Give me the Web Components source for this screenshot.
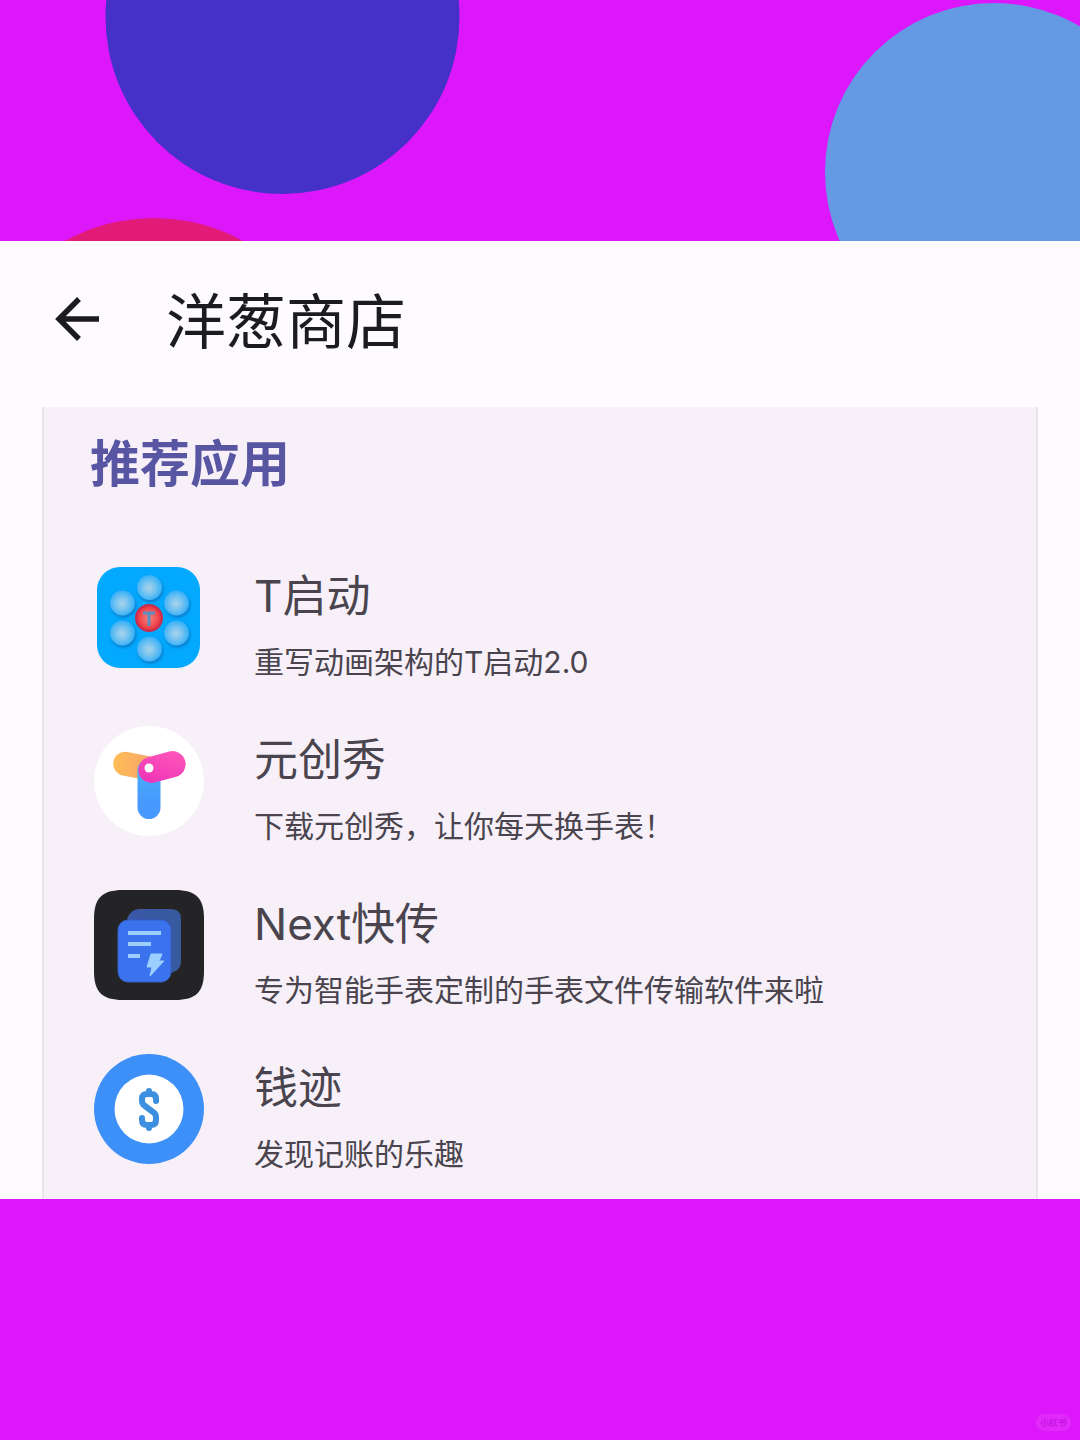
<!DOCTYPE html>
<html lang="zh-CN">
<head>
<meta charset="utf-8">
<meta name="viewport" content="width=device-width, initial-scale=1">
<title>洋葱商店</title>
<style>
  body {
    margin: 0;
    min-height: 100vh;
    background: #dc18fa;
    font-family: Inter, "Noto Sans CJK SC", sans-serif;
    color: #1c1b1f;
  }
</style>
</head>
<body>
<store-page>
  <store-header slot="header">洋葱商店</store-header>
  <app-section heading="推荐应用">
    <app-item>
      <svg slot="icon" viewBox="0 0 110 110" aria-hidden="true">
        <defs>
          <radialGradient id="ball" cx=".48" cy=".52" r=".55">
            <stop offset="0" stop-color="#a9d3ea"/><stop offset=".45" stop-color="#79c4f0"/><stop offset="1" stop-color="#2caef8"/>
          </radialGradient>
          <radialGradient id="core"><stop offset="0" stop-color="#ee8582"/><stop offset=".7" stop-color="#f3484d"/><stop offset="1" stop-color="#dc2944"/></radialGradient>
          <filter id="drop" x="-30%" y="-30%" width="160%" height="160%"><feDropShadow dx="1" dy="2" stdDeviation="1.5" flood-color="#075baa" flood-opacity=".65"/></filter>
        </defs>
        <rect x="3" y="5" width="103" height="101" rx="23" fill="#03a9fe"/>
        <g fill="url(#ball)" filter="url(#drop)">
          <circle cx="55.500" cy="25.500" r="12.500"/><circle cx="28.500" cy="41" r="12.500"/><circle cx="82.500" cy="41" r="12.500"/>
          <circle cx="28.500" cy="71" r="12.500"/><circle cx="82.500" cy="71" r="12.500"/><circle cx="55.500" cy="87" r="12.500"/>
        </g>
        <circle cx="55" cy="56" r="13" fill="url(#core)" stroke="#c52f51" stroke-width="2"/>
        <path d="M49 51H61M55 51V64" fill="none" stroke="#5a8fc0" stroke-width="3"/>
      </svg>
      T启动
      <span slot="summary">重写动画架构的T启动2.0</span>
    </app-item>
    <app-item>
      <svg slot="icon" viewBox="0 0 110 110" aria-hidden="true">
        <defs>
          <linearGradient id="blue" x1="0" y1="0" x2="0" y2="1"><stop offset="0" stop-color="#44b6f4"/><stop offset=".7" stop-color="#4899ff"/></linearGradient>
          <linearGradient id="pink" x1="0" y1="1" x2="1" y2="0"><stop offset="0" stop-color="#ed2fb8"/><stop offset="1" stop-color="#ff5cb9"/></linearGradient>
          <linearGradient id="amber"><stop offset="0" stop-color="#ffbd56"/><stop offset="1" stop-color="#f39d70"/></linearGradient>
        </defs>
        <circle cx="55" cy="55" r="55" fill="#fff"/>
        <rect x="19" y="28" width="50" height="24" rx="12" transform="rotate(11 43 40)" fill="url(#amber)"/>
        <rect x="43.500" y="33" width="23" height="60" rx="11.500" fill="url(#blue)"/>
        <rect x="44" y="28" width="48" height="26" rx="13" transform="rotate(-15 68 41)" fill="url(#pink)"/>
        <circle cx="55" cy="42" r="4.500" fill="#fff"/>
      </svg>
      元创秀
      <span slot="summary">下载元创秀，让你每天换手表！</span>
    </app-item>
    <app-item>
      <svg slot="icon" viewBox="0 0 110 110" aria-hidden="true">
        <defs><linearGradient id="back"><stop offset="0" stop-color="#3b57a9"/><stop offset="1" stop-color="#375a9d"/></linearGradient></defs>
        <path d="M29 0H81C102 0 110 8 110 29V81C110 102 102 110 81 110H29C8 110 0 102 0 81V29C0 8 8 0 29 0Z" fill="#242325"/>
        <path d="M33 29Q37 19 45 19H77Q87 19 87 29V72Q87 80 77 83Z" fill="url(#back)"/>
        <rect x="24" y="30" width="53" height="62" rx="10" fill="#3b73ee" stroke="#3561c8" stroke-width="1"/>
        <path d="M34 43H67M34 54H57M34 66H46" stroke="#9cceff" stroke-width="4"/>
        <path d="M57 64H68L65 71H70L56 86L58 77H53Z" fill="#9cceff" stroke="#9cceff" stroke-width="1" stroke-linejoin="round"/>
      </svg>
      Next快传
      <span slot="summary">专为智能手表定制的手表文件传输软件来啦</span>
    </app-item>
    <app-item>
      <svg slot="icon" viewBox="0 0 110 110" aria-hidden="true">
        <circle cx="55" cy="55" r="55" fill="#3d90f8"/>
        <circle cx="55" cy="55" r="34.500" fill="#fff"/>
        <path d="M62 47V45Q62 40 57 40H53Q48 40 48 45V47Q48 50 51 52L59 58Q62 60 62 63V66Q62 71 57 71H53Q48 71 48 66V64M55 40V37M55 71V74" fill="none" stroke="#3d8fdf" stroke-width="6" stroke-linecap="round" stroke-linejoin="round"/>
      </svg>
      钱迹
      <span slot="summary">发现记账的乐趣</span>
    </app-item>
  </app-section>
  <source-badge slot="badge">小红书</source-badge>
</store-page>

<script>
  class BaseElement extends HTMLElement {
    constructor() {
      super();
      this.attachShadow({ mode: "open" }).innerHTML = this.constructor.markup;
    }
  }

  customElements.define("store-page", class extends BaseElement {
    static markup = `
      <style>
        :host { display: flex; flex-direction: column; min-height: 100vh; position: relative; }
        .art { display: block; width: 100%; height: 241px; }
        main { background: #fdfbfe; }
        ::slotted([slot="badge"]) { position: absolute; right: 9px; bottom: 9px; }
      </style>
      <svg class="art" viewBox="0 0 1080 241" preserveAspectRatio="xMidYMin slice" aria-hidden="true">
        <circle cx="282.500" cy="17" r="177" fill="#4530c8"/>
        <circle cx="994" cy="172" r="169" fill="#6499e4"/>
        <circle cx="154" cy="402" r="184" fill="#e21b79"/>
      </svg>
      <main><slot name="header"></slot><slot></slot></main>
      <slot name="badge"></slot>`;
  });

  customElements.define("store-header", class extends BaseElement {
    static markup = `
      <style>
        :host { display: block; }
        header { display: flex; align-items: center; gap: 54px; height: 162px; padding: 0 42px 4px; }
        button { width: 70px; height: 72px; padding: 0; border: 0; background: none; color: inherit; }
        svg { display: block; width: 70px; height: 72px; }
        h1 { margin: 0; font-size: 60px; line-height: 88px; font-weight: 400; }
      </style>
      <header>
        <button type="button" aria-label="返回">
          <svg viewBox="0 0 70 72" fill="none" stroke="currentColor" stroke-width="5.500"><path d="M57 33H17M37 13L17 33L37 53"/></svg>
        </button>
        <h1><slot></slot></h1>
      </header>`;
  });

  customElements.define("app-section", class extends BaseElement {
    static markup = `
      <style>
        :host { display: block; padding: 0 42px; }
        section { padding: 20px 50px 23px; background: #f7f0f8; border: solid #e9e4eb; border-width: 0 2px; }
        h2 { margin: 0 -4px 61px; font-size: 50px; line-height: 74px; font-weight: 700; color: #5856a2; }
        .list { display: flex; flex-direction: column; gap: 42px; }
      </style>
      <section><h2></h2><div class="list"><slot></slot></div></section>`;
    connectedCallback() {
      this.shadowRoot.querySelector("h2").textContent = this.getAttribute("heading");
    }
  });

  customElements.define("app-item", class extends BaseElement {
    static markup = `
      <style>
        :host { display: block; color: #49444d; }
        article { display: flex; align-items: flex-start; gap: 50px; }
        ::slotted(svg) { display: block; flex: none; width: 110px; height: 110px; }
        .text { display: flex; flex-direction: column; gap: 10px; min-width: 0; }
        h3 { margin: 0; font-size: 44px; line-height: 68px; font-weight: 400; }
        p { margin: 0; font-size: 30px; line-height: 44px; }
      </style>
      <article>
        <slot name="icon"></slot>
        <div class="text"><h3><slot></slot></h3><p><slot name="summary"></slot></p></div>
      </article>`;
  });

  customElements.define("source-badge", class extends BaseElement {
    static markup = `
      <style>
        :host { display: block; padding: 0 4px; border-radius: 9px; background: #e12afa; color: #c615e4; font-size: 9px; line-height: 17px; font-weight: 700; }
      </style>
      <slot></slot>`;
  });
</script>
</body>
</html>
